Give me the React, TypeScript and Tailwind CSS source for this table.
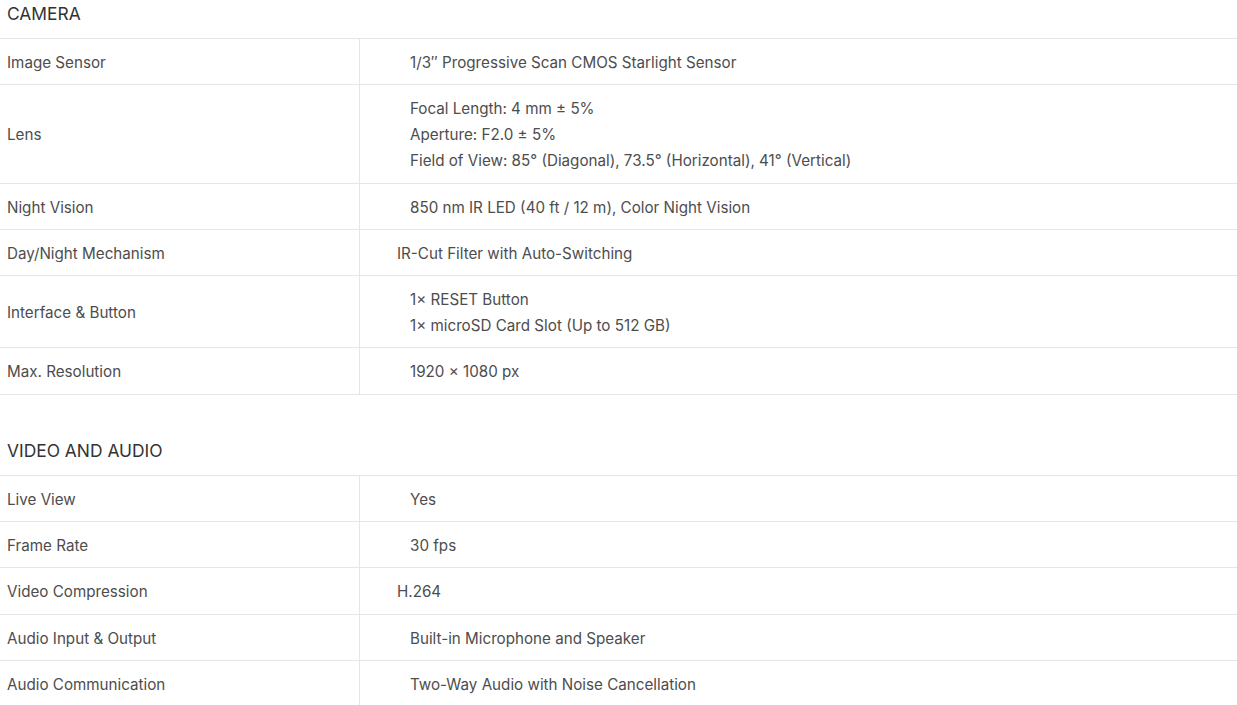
import React from "react";

type Row = { label: string; values: string[]; indent?: boolean };

const camera: Row[] = [
  { label: "Image Sensor", values: ["1/3\u2033 Progressive Scan CMOS Starlight Sensor"] },
  {
    label: "Lens",
    values: [
      "Focal Length: 4 mm \u00b1 5%",
      "Aperture: F2.0 \u00b1 5%",
      "Field of View: 85\u00b0 (Diagonal), 73.5\u00b0 (Horizontal), 41\u00b0 (Vertical)",
    ],
  },
  { label: "Night Vision", values: ["850 nm IR LED (40 ft / 12 m), Color Night Vision"] },
  { label: "Day/Night Mechanism", values: ["IR-Cut Filter with Auto-Switching"], indent: true },
  { label: "Interface & Button", values: ["1\u00d7 RESET Button", "1\u00d7 microSD Card Slot (Up to 512 GB)"] },
  { label: "Max. Resolution", values: ["1920 \u00d7 1080 px"] },
];

const video: Row[] = [
  { label: "Live View", values: ["Yes"] },
  { label: "Frame Rate", values: ["30 fps"] },
  { label: "Video Compression", values: ["H.264"], indent: true },
  { label: "Audio Input & Output", values: ["Built-in Microphone and Speaker"] },
  { label: "Audio Communication", values: ["Two-Way Audio with Noise Cancellation"] },
];

function Section({ title, rows, first }: { title: string; rows: Row[]; first?: boolean }) {
  return (
    <section className={first ? "" : "mt-[42px]"}>
      <h2 className="h-[39px] flex items-center px-[7px] text-[17.4px] text-[#333] border-b border-[#e6e6e6] font-normal pb-[12px] pt-[2px]">
        {title}
      </h2>
      {rows.map((r) => (
        <div key={r.label} className="flex border-b border-[#e6e6e6] text-[15.2px] leading-[26px] text-[#4d4d4d]">
          <div className="w-[360px] shrink-0 border-r border-[#e6e6e6] flex items-center px-[7px] pt-[11px] pb-[8.3px]">
            {r.label}
          </div>
          <div className={`flex-1 pt-[11px] pb-[8.3px] ${r.indent ? "pl-[37px]" : "pl-[50px]"}`}>
            {r.values.map((v) => (
              <div key={v}>{v}</div>
            ))}
          </div>
        </div>
      ))}
    </section>
  );
}

export default function App() {
  return (
    <div className="w-[1237px] bg-white" style={{ fontFamily: "Inter, 'Noto Sans', sans-serif" }}>
      <Section title="CAMERA" rows={camera} first />
      <Section title="VIDEO AND AUDIO" rows={video} />
    </div>
  );
}
